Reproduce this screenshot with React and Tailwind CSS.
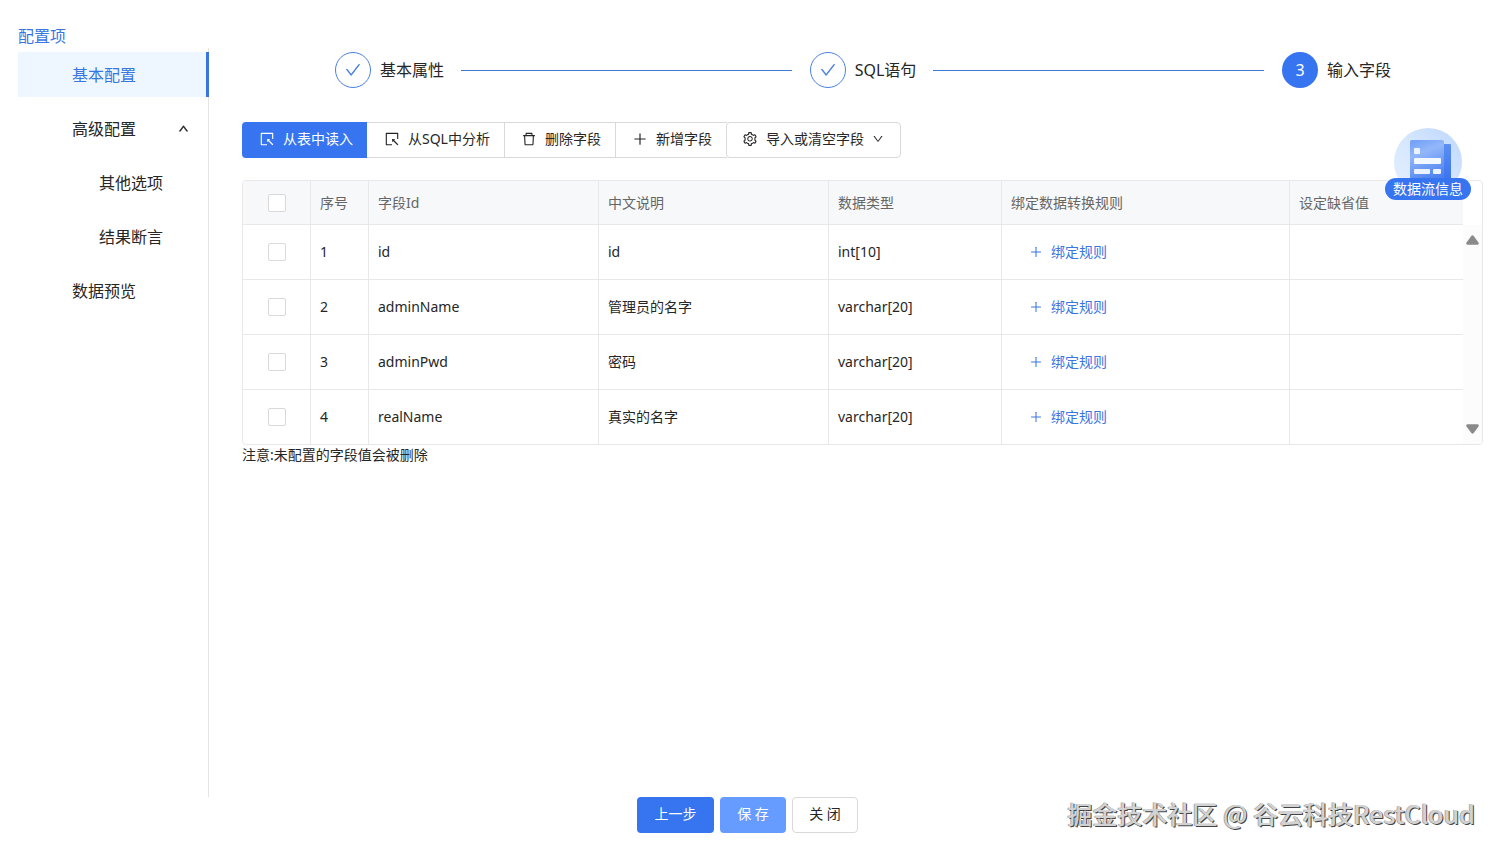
import React, { useState } from 'react';
import {
  AiOutlineCheck,
  AiOutlineDelete,
  AiOutlineDown,
  AiOutlinePlus,
  AiOutlineSelect,
  AiOutlineSetting,
  AiOutlineUp,
} from 'react-icons/ai';

const menuItems = [
  { key: 'basic', label: '基本配置' },
  { key: 'advanced', label: '高级配置', expandable: true },
  { key: 'other', label: '其他选项', child: true },
  { key: 'assert', label: '结果断言', child: true },
  { key: 'preview', label: '数据预览' },
];

const steps = [
  { title: '基本属性', done: true },
  { title: 'SQL语句', done: true },
  { title: '输入字段', done: false },
];

const fields = [
  { no: 1, id: 'id', name: 'id', type: 'int[10]' },
  { no: 2, id: 'adminName', name: '管理员的名字', type: 'varchar[20]' },
  { no: 3, id: 'adminPwd', name: '密码', type: 'varchar[20]' },
  { no: 4, id: 'realName', name: '真实的名字', type: 'varchar[20]' },
];

const Sidebar = ({ active, onSelect }) => (
  <aside className="w-[209px] shrink-0 flex flex-col pt-6 pl-[18px]">
    <h2 className="h-6 leading-6 text-base text-[#3a76e0]">配置项</h2>
    <nav className="flex-1 flex flex-col gap-[9px] pt-1 border-r border-[#e4e4e4]">
      {menuItems.map((item) => (
        <button
          key={item.key}
          type="button"
          onClick={() => onSelect(item.key)}
          className={`h-[45px] -mr-px flex items-center text-base ${item.child ? 'pl-[81px]' : 'pl-[54px]'} ${
            active === item.key ? 'bg-[#eef6ff] text-[#3a76e0] border-r-3 border-[#3a76e0]' : 'text-[#262626]'
          }`}
        >
          {item.label}
          {item.expandable && <AiOutlineUp className="ml-auto mr-5 size-[11px] stroke-[60px]" />}
        </button>
      ))}
    </nav>
  </aside>
);

const Steps = () => (
  <ol className="flex items-center pl-[93px] pr-[92px]">
    {steps.map((step, i) => (
      <React.Fragment key={step.title}>
        {i > 0 && <li aria-hidden="true" className="flex-1 h-px ml-[17px] mr-[18px] bg-[#3f78d0]" />}
        <li className="flex items-center gap-[9px] text-base text-[#262626]">
          {step.done ? (
            <span className="size-9 rounded-full border border-[#4a7fe0] text-[#4a7fe0] flex items-center justify-center">
              <AiOutlineCheck className="size-[18px]" />
            </span>
          ) : (
            <span className="size-9 rounded-full bg-[#3674f0] text-white flex items-center justify-center">
              {i + 1}
            </span>
          )}
          {step.title}
        </li>
      </React.Fragment>
    ))}
  </ol>
);

const ToolButton = ({ className, children }) => (
  <button type="button" className={`h-9 pb-0.5 flex items-center gap-2 whitespace-nowrap ${className}`}>
    {children}
  </button>
);

const Toolbar = () => (
  <div className="flex text-[#262626]">
    <ToolButton className="w-[125px] pl-[17px] rounded-l bg-[#3674f0] text-white">
      <AiOutlineSelect className="size-4" />
      从表中读入
    </ToolButton>
    <ToolButton className="w-[138px] pl-[17px] border-y border-r border-[#d9d9d9]">
      <AiOutlineSelect className="size-4" />
      从SQL中分析
    </ToolButton>
    <ToolButton className="w-[111px] pl-4 border-y border-r border-[#d9d9d9]">
      <AiOutlineDelete className="size-4" />
      删除字段
    </ToolButton>
    <ToolButton className="w-[111px] pl-4 border-y border-[#d9d9d9]">
      <AiOutlinePlus className="size-4" />
      新增字段
    </ToolButton>
    <ToolButton className="-ml-px w-[175px] pl-[15px] rounded border border-[#d9d9d9]">
      <AiOutlineSetting className="size-4" />
      导入或清空字段
      <AiOutlineDown className="size-3" />
    </ToolButton>
  </div>
);

const Checkbox = ({ label }) => (
  <input
    type="checkbox"
    aria-label={label}
    className="block mx-auto size-[18px] appearance-none rounded-xs border border-[#d9d9d9] bg-white checked:bg-[#3674f0]"
  />
);

const FieldTable = () => {
  const th = 'h-11 px-[9px] font-normal border-r border-b border-[#e8e8e8]';
  const td = 'h-[55px] px-[9px] border-r border-b border-[#e8e8e8]';

  return (
    <div className="flex rounded border border-[#e8e8e8] overflow-hidden">
      <table className="flex-1 table-fixed border-separate border-spacing-0 text-left">
        <colgroup>
          <col className="w-[68px]" />
          <col className="w-[58px]" />
          <col className="w-[230px]" />
          <col className="w-[230px]" />
          <col className="w-[173px]" />
          <col className="w-[288px]" />
          <col />
        </colgroup>
        <thead className="bg-[#f6f8fa] text-[#666]">
          <tr>
            <th className={th}><Checkbox label="全选" /></th>
            <th className={th}>序号</th>
            <th className={th}>字段Id</th>
            <th className={th}>中文说明</th>
            <th className={th}>数据类型</th>
            <th className={th}>绑定数据转换规则</th>
            <th className="h-11 px-[9px] font-normal border-b border-[#e8e8e8]">设定缺省值</th>
          </tr>
        </thead>
        <tbody className="text-[#262626] [&>tr:last-child>td]:h-[54px] [&>tr:last-child>td]:border-b-0">
          {fields.map((row) => (
            <tr key={row.no}>
              <td className={td}><Checkbox label={row.id} /></td>
              <td className={td}>{row.no}</td>
              <td className={td}>{row.id}</td>
              <td className={td}>{row.name}</td>
              <td className={td}>{row.type}</td>
              <td className={td}>
                <button type="button" className="ml-[18px] flex items-center gap-2 text-[#3a76e0]">
                  <AiOutlinePlus className="size-[14px]" />
                  绑定规则
                </button>
              </td>
              <td className="h-[55px] border-b border-[#e8e8e8]" />
            </tr>
          ))}
        </tbody>
      </table>

      {/* Scroll track */}
      <div className="w-[19px] mt-11 flex flex-col items-center justify-between py-[10px] bg-[#fcfcfc]">
        <button type="button" aria-label="向上滚动">
          <svg viewBox="0 0 13 10" className="block w-[13px] h-[10px]" fill="#8a8a8a">
            <path d="M5.3 .9Q6.5-.5 7.7.9L12.5 7.6Q13.3 9.6 11.4 9.8H1.6Q-.3 9.6.5 7.6Z" />
          </svg>
        </button>
        <button type="button" aria-label="向下滚动">
          <svg viewBox="0 0 13 10" className="block w-[13px] h-[10px] rotate-180" fill="#8a8a8a">
            <path d="M5.3 .9Q6.5-.5 7.7.9L12.5 7.6Q13.3 9.6 11.4 9.8H1.6Q-.3 9.6.5 7.6Z" />
          </svg>
        </button>
      </div>
    </div>
  );
};

const FlowInfo = () => (
  <button type="button" className="absolute right-7 top-32 w-[86px] flex flex-col items-center">
    <svg viewBox="0 0 68 68" className="block size-[68px]">
      <defs>
        <linearGradient id="disc" x1="0" y1="1" x2="1" y2="0">
          <stop offset="0" stopColor="#e6f0ff" />
          <stop offset="0.5" stopColor="#d6e7fe" />
          <stop offset="1" stopColor="#bdd7fd" />
        </linearGradient>
        <linearGradient id="page" x1="0" y1="0" x2="0.3" y2="1">
          <stop offset="0" stopColor="#6f9df6" />
          <stop offset="0.35" stopColor="#93b7fa" />
          <stop offset="1" stopColor="#4a80ee" />
        </linearGradient>
        <linearGradient id="spine" x1="0" y1="0" x2="0" y2="1">
          <stop offset="0" stopColor="#5c8ff3" />
          <stop offset="1" stopColor="#346fee" />
        </linearGradient>
      </defs>
      <circle cx="34" cy="34" r="34" fill="url(#disc)" />
      <rect x="46" y="16" width="11" height="42" rx="1" fill="url(#spine)" />
      <rect x="16" y="12" width="34" height="45" rx="2" fill="url(#page)" />
      <rect x="20" y="20" width="6" height="6" rx="1" fill="#eaf2ff" />
      <rect x="20" y="30" width="27" height="6" rx="1" fill="#f3f8ff" />
      <rect x="20" y="41" width="16" height="5" rx="1" fill="#eaf2ff" />
      <rect x="39" y="41" width="8" height="5" rx="1" fill="#eaf2ff" />
    </svg>
    <span className="-mt-[18px] w-full h-[22px] leading-[22px] rounded-full bg-[#3674f0] text-white text-center whitespace-nowrap relative">
      数据流信息
    </span>
  </button>
);

const App = () => {
  const [active, setActive] = useState('basic');

  return (
    <div className="relative min-h-screen flex flex-col bg-white text-sm font-['Noto_Sans','Noto_Sans_CJK_SC',sans-serif]">
      <div className="flex-1 flex">
        <Sidebar active={active} onSelect={setActive} />

        <main className="flex-1 min-w-0 pl-[33px] pr-4 pt-[52px]">
          <Steps />
          <div className="mt-[34px] mb-[22px]">
            <Toolbar />
          </div>
          <FieldTable />
          <p className="leading-5 text-[#262626]">注意:未配置的字段值会被删除</p>
        </main>
      </div>

      {/* Footer actions */}
      <footer className="flex justify-center gap-[6px] pr-1 pb-[19px]">
        <button type="button" className="h-9 w-[77px] pb-0.5 rounded bg-[#3674f0] text-white">上一步</button>
        <button type="button" className="h-9 w-[66px] pb-0.5 rounded bg-[#669bff] text-white">保 存</button>
        <button type="button" className="h-9 w-[66px] pb-0.5 rounded border border-[#d9d9d9] text-[#262626]">关 闭</button>
      </footer>

      <FlowInfo />

      <div className="absolute right-6 bottom-[21px] text-[25px] leading-9 font-medium text-[#d2d2d2] font-['Noto_Sans_CJK_SC',sans-serif] [text-shadow:1px_1px_0_#444,-1px_0_0_#aaa]">
        掘金技术社区 @ 谷云科技RestCloud
      </div>
    </div>
  );
};

export default App;
